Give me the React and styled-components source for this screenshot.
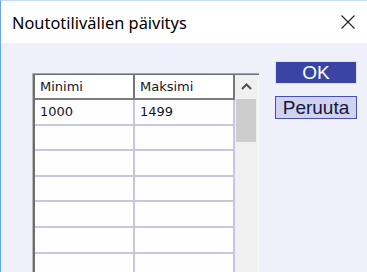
import React from 'react';
import styled, { createGlobalStyle } from 'styled-components';

const GlobalStyle = createGlobalStyle`
  html, body {
    margin: 0;
    padding: 0;
    background: #eff0f9;
  }
`;

const rows = [
  { min: '1000', max: '1499' },
  { min: '', max: '' },
  { min: '', max: '' },
  { min: '', max: '' },
  { min: '', max: '' },
  { min: '', max: '' },
  { min: '', max: '' },
];

function App() {
  return (
    <>
      <GlobalStyle />
      <Window>
        <TitleBar>
          <Title>Noutotilivälien päivitys</Title>
          <CloseIcon width="14" height="14" viewBox="0 0 14 14">
            <path d="M0.5 0.5 L13.5 13.5 M13.5 0.5 L0.5 13.5" stroke="#222" strokeWidth="1.1" fill="none" />
          </CloseIcon>
        </TitleBar>
        <Body>
          <Frame>
            <Inner>
              <Columns>
                <HeaderCell>Minimi</HeaderCell>
                <HeaderCell>Maksimi</HeaderCell>
                {rows.map((r, i) => (
                  <React.Fragment key={i}>
                    <Cell>{r.min}</Cell>
                    <Cell>{r.max}</Cell>
                  </React.Fragment>
                ))}
              </Columns>
              <ScrollBar>
                <UpButton>
                  <svg width="11" height="7" viewBox="0 0 11 7">
                    <path d="M1 6 L5.5 1.5 L10 6" stroke="#505050" strokeWidth="2" fill="none" />
                  </svg>
                </UpButton>
                <Thumb />
              </ScrollBar>
            </Inner>
          </Frame>
          <Buttons>
            <Button $primary>OK</Button>
            <Button>Peruuta</Button>
          </Buttons>
        </Body>
      </Window>
    </>
  );
}

export default App;

const Window = styled.div`
  width: 367px;
  height: 272px;
  box-sizing: border-box;
  overflow: hidden;
  border-left: 1px solid #6aa4ec;
  border-top: 1px solid #c6dcf6;
  display: flex;
  flex-direction: column;
  background: #eff0f9;
`;

const TitleBar = styled.div`
  height: 42px;
  flex: none;
  background: #fff;
  display: flex;
  align-items: center;
  justify-content: space-between;
  padding: 0 12px 0 11px;
`;

const Title = styled.div`
  font-family: "Noto Sans", sans-serif;
  font-size: 16.4px;
  color: #000;
`;

const CloseIcon = styled.svg`
  display: block;
`;

const Body = styled.div`
  flex: 1;
  display: flex;
  align-items: flex-start;
  padding-left: 31px;
  overflow: hidden;
`;

const Frame = styled.div`
  margin-top: 30px;
  border-top: 1px solid #a8a8a8;
  border-left: 1px solid #b8b8b8;
`;

const Inner = styled.div`
  display: flex;
  border-top: 1px solid #6e6e6e;
  border-left: 2px solid #6e6e6e;
  background: #f0f0f0;
`;

const Columns = styled.div`
  display: grid;
  grid-template-columns: 100px 100px;
  font-family: "DejaVu Sans", sans-serif;
  font-size: 13px;
  color: #14142a;
`;

const HeaderCell = styled.div`
  height: 23px;
  display: flex;
  align-items: center;
  padding-left: 5px;
  background: #fff;
  border-right: 2px solid #767676;
  border-bottom: 2px solid #7c7c7c;
`;

const Cell = styled.div`
  height: 23.6px;
  display: flex;
  align-items: center;
  padding-left: 5px;
  background: #fefeff;
  border-right: 2px solid #c6c6dc;
  border-bottom: 2px solid #c6c6dc;
`;

const ScrollBar = styled.div`
  width: 23px;
  border-right: 1px solid #f8f8f8;
  background: #f0f0f0;
  display: flex;
  flex-direction: column;
`;

const UpButton = styled.div`
  height: 24px;
  display: flex;
  align-items: center;
  justify-content: center;
  svg {
    display: block;
    margin-top: -1px;
  }
`;

const Thumb = styled.div`
  height: 43px;
  margin: 0 2px 0 1px;
  background: #cdcdcd;
`;

const Buttons = styled.div`
  margin: 18px 0 0 16px;
  display: flex;
  flex-direction: column;
  gap: 12px;
`;

const Button = styled.button`
  width: 82px;
  height: 23px;
  box-sizing: border-box;
  padding: 0;
  font-family: "Liberation Sans", Arial, sans-serif;
  font-size: 19px;
  line-height: 1;
  cursor: pointer;
  color: ${(p) => (p.$primary ? '#fff' : '#16163a')};
  background: ${(p) => (p.$primary ? '#3a44a4' : '#cfd3f1')};
  border: 1px solid ${(p) => (p.$primary ? '#dfe1f4' : '#4650ae')};
`;
